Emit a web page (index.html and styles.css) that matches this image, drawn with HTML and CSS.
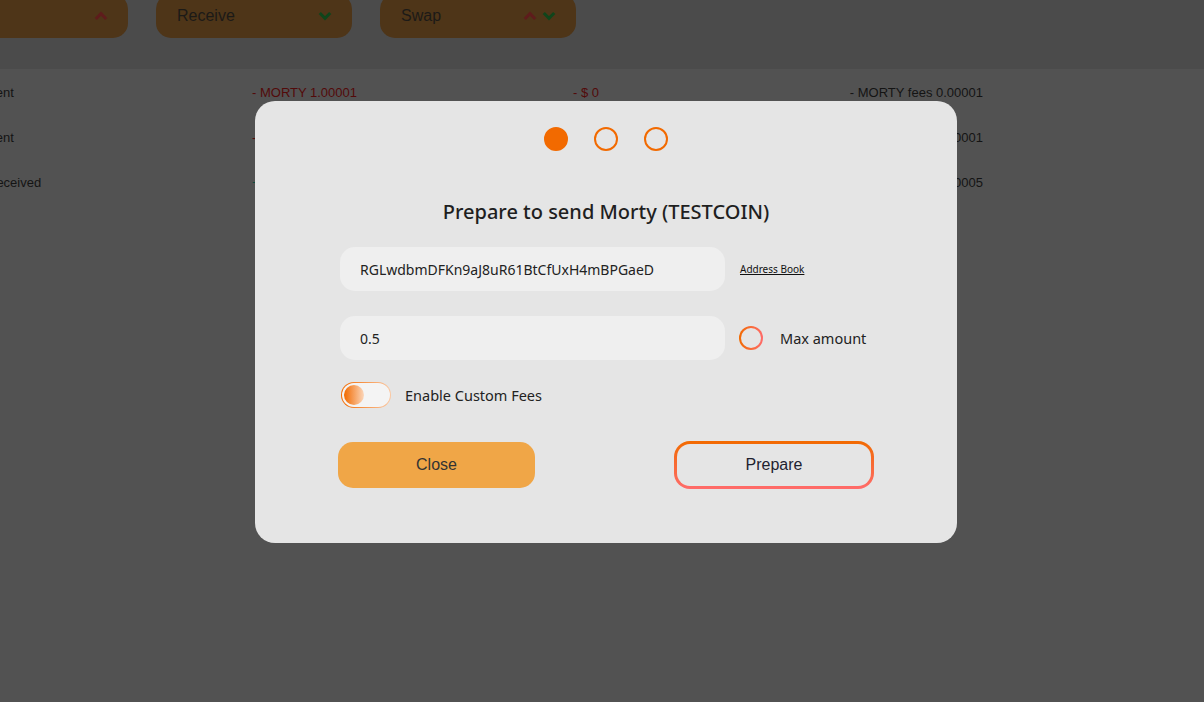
FILE: index.html
```html
<!DOCTYPE html>
<html lang="en">
<head>
    <meta charset="UTF-8">
    <meta name="viewport" content="width=device-width, initial-scale=1.0">
    <link rel="stylesheet" href="styles.css">
</head>
<body>

<div class="page">
    <div class="action-bar">
        <div class="action-button">
            <span>Send</span>
            <span class="chevrons">
                <svg class="chevron up" viewBox="0 0 14 10"><path d="M1.8 8 L7 2.6 L12.2 8"/></svg>
            </span>
        </div>
        <div class="action-button">
            <span>Receive</span>
            <span class="chevrons">
                <svg class="chevron down" viewBox="0 0 14 10"><path d="M1.8 2 L7 7.4 L12.2 2"/></svg>
            </span>
        </div>
        <div class="action-button">
            <span>Swap</span>
            <span class="chevrons">
                <svg class="chevron up" viewBox="0 0 14 10"><path d="M1.8 8 L7 2.6 L12.2 8"/></svg>
                <svg class="chevron down" viewBox="0 0 14 10"><path d="M1.8 2 L7 7.4 L12.2 2"/></svg>
            </span>
        </div>
    </div>

    <div class="history">
        <div class="history-row">
            <span>Sent</span>
            <span class="negative">- MORTY 1.00001</span>
            <span class="negative">- $ 0</span>
            <span class="fees">- MORTY fees 0.00001</span>
        </div>
        <div class="history-row">
            <span>Sent</span>
            <span class="negative">- MORTY 2.00001</span>
            <span class="negative">- $ 0</span>
            <span class="fees">- MORTY fees 0.00001</span>
        </div>
        <div class="history-row">
            <span>Received</span>
            <span class="positive">+ MORTY 5</span>
            <span class="positive">+ $ 0</span>
            <span class="fees">- MORTY fees 0.00005</span>
        </div>
    </div>
</div>

<div class="modal-backdrop">
    <div class="modal">
        <div class="steps">
            <div class="step active"></div>
            <div class="step"></div>
            <div class="step"></div>
        </div>

        <h2 class="modal-title">Prepare to send Morty (TESTCOIN)</h2>

        <div class="field-row">
            <div class="field">RGLwdbmDFKn9aJ8uR61BtCfUxH4mBPGaeD</div>
            <a class="address-book" href="#">Address Book</a>
        </div>

        <div class="field-row amount-row">
            <div class="field">0.5</div>
            <div class="radio"></div>
            <span class="option-label">Max amount</span>
        </div>

        <div class="toggle-row">
            <div class="toggle"><div class="toggle-knob"></div></div>
            <span class="option-label">Enable Custom Fees</span>
        </div>

        <div class="modal-actions">
            <div class="btn btn-close">Close</div>
            <div class="btn btn-prepare">Prepare</div>
        </div>
    </div>
</div>

</body>
</html>
```

FILE: styles.css
```css
body {
    margin: 0;
    height: 100vh;
    overflow: hidden;
    background-color: #525252;
    font-family: "Liberation Sans", Arial, sans-serif;
    position: relative;
}

/* page behind the dialog, already dimmed */
.action-bar {
    height: 69px;
    background: #4b4b4b;
    display: flex;
    gap: 28px;
    margin-left: -68px;
}

.action-button {
    width: 196px;
    height: 44px;
    margin-top: -6px;
    box-sizing: border-box;
    padding: 0 20px 0 21px;
    background: #4e3518;
    border-radius: 15px;
    display: flex;
    align-items: center;
    justify-content: space-between;
    color: #1c1a17;
    font-size: 16px;
}

.chevrons {
    display: flex;
    gap: 5px;
}

.chevron {
    width: 14px;
    height: 10px;
    fill: none;
    stroke-width: 3;
}

.chevron.up {
    stroke: #5e1c1c;
}

.chevron.down {
    stroke: #0f451b;
}

.history {
    margin-left: -13px;
    width: 996px;
}

.history-row {
    height: 45px;
    display: grid;
    grid-template-columns: 265px 321px 1fr auto;
    align-items: center;
    font-size: 13px;
    color: #141414;
}

.history-row:first-child {
    margin-top: 1px;
}

.negative {
    color: #520a0a;
}

.positive {
    color: #0e4a3e;
}

/* modal */
.modal-backdrop {
    position: absolute;
    inset: 0;
    display: flex;
    justify-content: center;
    align-items: flex-start;
    padding: 101px 0 0 8px;
}

.modal {
    width: 702px;
    box-sizing: border-box;
    padding: 26px 83px 54px;
    background: #e5e5e5;
    border-radius: 20px;
    font-family: "Noto Sans", "Open Sans", sans-serif;
    color: #1e1e1e;
}

.steps {
    display: flex;
    justify-content: center;
    gap: 26px;
}

.step {
    width: 24px;
    height: 24px;
    box-sizing: border-box;
    border: 2px solid #f26a00;
    border-radius: 50%;
}

.step.active {
    background: #f26a00;
}

.modal-title {
    margin: 49px 0 0;
    line-height: 24px;
    text-align: center;
    font-size: 20px;
    font-weight: 500;
    color: #1f1f1f;
}

.field-row {
    display: flex;
    align-items: center;
    margin-top: 23px;
    padding-left: 2px;
}

.amount-row {
    margin-top: 25px;
}

.field {
    width: 385px;
    height: 44px;
    box-sizing: border-box;
    padding-left: 20px;
    background: #efefef;
    border-radius: 15px;
    display: flex;
    align-items: center;
    font-size: 14px;
    color: #222;
}

.address-book {
    margin-left: 15px;
    font-size: 10px;
    color: #111;
    text-decoration: underline;
}

.radio {
    width: 24px;
    height: 24px;
    box-sizing: border-box;
    margin-left: 14px;
    border: 2px solid transparent;
    border-radius: 50%;
    background: linear-gradient(#e5e5e5, #e5e5e5) padding-box,
                linear-gradient(90deg, #f26a00, #ff6b6b) border-box;
}

.option-label {
    font-size: 14.5px;
    color: #222;
}

.amount-row .option-label {
    margin-left: 17px;
}

.toggle-row {
    display: flex;
    align-items: center;
    gap: 14px;
    margin-top: 22px;
    padding-left: 3px;
}

.toggle {
    width: 50px;
    height: 26px;
    box-sizing: border-box;
    border: 1.5px solid transparent;
    border-radius: 13px;
    background: linear-gradient(#f4f4f4, #f4f4f4) padding-box,
                linear-gradient(90deg, #f26a00, #fcc9a3) border-box;
    padding: 1.5px;
}

.toggle-knob {
    width: 20px;
    height: 20px;
    border-radius: 50%;
    background: linear-gradient(90deg, #f26a00, #fbd6ba);
}

.modal-actions {
    display: flex;
    justify-content: space-between;
    align-items: center;
    margin-top: 33px;
}

.btn {
    height: 46px;
    box-sizing: border-box;
    border-radius: 15px;
    display: flex;
    align-items: center;
    justify-content: center;
    font-family: "Liberation Sans", Arial, sans-serif;
    font-size: 16px;
    color: #333;
    cursor: pointer;
}

.btn-close {
    width: 197px;
    background: #f0a647;
}

.btn-prepare {
    width: 200px;
    height: 48px;
    border: 3px solid transparent;
    border-radius: 16px;
    background: linear-gradient(#e5e5e5, #e5e5e5) padding-box,
                linear-gradient(180deg, #f26a00, #ff6b6b) border-box;
    color: #1e2230;
}
```
